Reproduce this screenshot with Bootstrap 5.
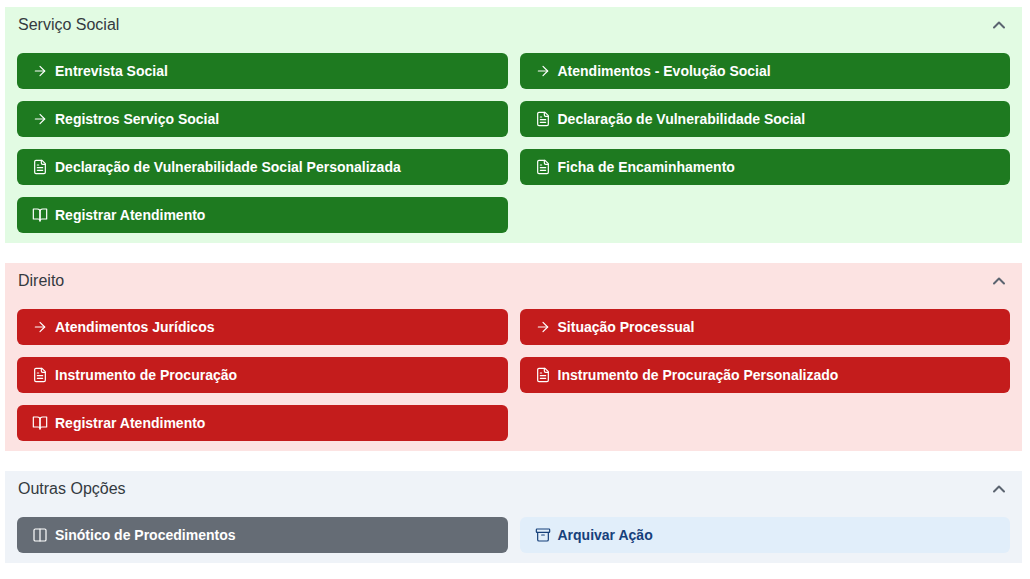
<!DOCTYPE html>
<html lang="pt-BR">
<head>
  <meta charset="UTF-8" />
  <meta name="viewport" content="width=device-width, initial-scale=1.0"/>
  <title>Ações</title>
  <link href="https://cdn.jsdelivr.net/npm/bootstrap@5.3.3/dist/css/bootstrap.min.css" rel="stylesheet">
  <style>
    body {
      background-color: #fff;
      font-family: "Liberation Sans", Arial, sans-serif;
      padding: 7px 8px 0 5px;
    }

    .area + .area { margin-top: 20px; }
    .area-green { background-color: #e2fbe3; }
    .area-red { background-color: #fce3e2; }
    .area-grey { background-color: #eff3f8; }

    .area-toggle {
      height: 36px;
      padding: 0 13px;
      border: 0;
      background: none;
      color: #343a40;
      font-size: 16px;
    }
    .area-toggle svg { color: #5b6470; stroke-width: 2.4; }
    .area-toggle.collapsed svg { transform: rotate(180deg); }

    .area-body { padding: 10px 12px; }
    .btn-grid {
      display: grid;
      grid-template-columns: 1fr 1fr;
      gap: 12px;
    }

    .act {
      height: 36px;
      padding: 0 15px;
      border: 0;
      border-radius: 6px;
      font-size: 14px;
      font-weight: 700;
      gap: 7px;
    }
    .act svg { flex: none; stroke-width: 1.8; }
    .act-green, .act-green:hover { background-color: #1e7a20; color: #fff; }
    .act-red, .act-red:hover { background-color: #c41c1c; color: #fff; }
    .act-grey, .act-grey:hover { background-color: #656c75; color: #fff; }
    .act-light, .act-light:hover { background-color: #e1eefa; color: #16407a; }

    .ico {
      fill: none;
      stroke: currentColor;
      stroke-linecap: round;
      stroke-linejoin: round;
    }
  </style>
</head>
<body>

  <svg class="d-none">
    <symbol id="i-arrow" viewBox="0 0 24 24"><path d="M5 12h14"/><path d="m12 5 7 7-7 7"/></symbol>
    <symbol id="i-file" viewBox="0 0 24 24"><path d="M15 2H6a2 2 0 0 0-2 2v16a2 2 0 0 0 2 2h12a2 2 0 0 0 2-2V7Z"/><path d="M14 2v4a2 2 0 0 0 2 2h4"/><path d="M10 9H8"/><path d="M16 13H8"/><path d="M16 17H8"/></symbol>
    <symbol id="i-book" viewBox="0 0 24 24"><path d="M2 3h6a4 4 0 0 1 4 4v14a3 3 0 0 0-3-3H2z"/><path d="M22 3h-6a4 4 0 0 0-4 4v14a3 3 0 0 1 3-3h7z"/></symbol>
    <symbol id="i-columns" viewBox="0 0 24 24"><rect width="18" height="18" x="3" y="3" rx="2"/><path d="M12 3v18"/></symbol>
    <symbol id="i-archive" viewBox="0 0 24 24"><rect width="20" height="5" x="2" y="3" rx="1"/><path d="M4 8v11a2 2 0 0 0 2 2h12a2 2 0 0 0 2-2V8"/><path d="M10 12h4"/></symbol>
    <symbol id="i-up" viewBox="0 0 24 24"><path d="m18 15-6-6-6 6"/></symbol>
  </svg>

  <!-- Servico Social -->
  <section class="area area-green">
    <button class="area-toggle w-100 d-flex align-items-center justify-content-between" type="button" data-bs-toggle="collapse" data-bs-target="#areaSocial">
      <span>Serviço Social</span>
      <svg class="ico" width="20" height="20"><use href="#i-up"/></svg>
    </button>
    <div class="collapse show" id="areaSocial">
      <div class="area-body btn-grid">
        <a href="#" class="btn act act-green d-flex align-items-center"><svg class="ico" width="16" height="16"><use href="#i-arrow"/></svg>Entrevista Social</a>
        <a href="#" class="btn act act-green d-flex align-items-center"><svg class="ico" width="16" height="16"><use href="#i-arrow"/></svg>Atendimentos - Evolução Social</a>
        <a href="#" class="btn act act-green d-flex align-items-center"><svg class="ico" width="16" height="16"><use href="#i-arrow"/></svg>Registros Serviço Social</a>
        <a href="#" class="btn act act-green d-flex align-items-center"><svg class="ico" width="16" height="16"><use href="#i-file"/></svg>Declaração de Vulnerabilidade Social</a>
        <a href="#" class="btn act act-green d-flex align-items-center"><svg class="ico" width="16" height="16"><use href="#i-file"/></svg>Declaração de Vulnerabilidade Social Personalizada</a>
        <a href="#" class="btn act act-green d-flex align-items-center"><svg class="ico" width="16" height="16"><use href="#i-file"/></svg>Ficha de Encaminhamento</a>
        <a href="#" class="btn act act-green d-flex align-items-center"><svg class="ico" width="16" height="16"><use href="#i-book"/></svg>Registrar Atendimento</a>
      </div>
    </div>
  </section>

  <!-- Direito -->
  <section class="area area-red">
    <button class="area-toggle w-100 d-flex align-items-center justify-content-between" type="button" data-bs-toggle="collapse" data-bs-target="#areaDireito">
      <span>Direito</span>
      <svg class="ico" width="20" height="20"><use href="#i-up"/></svg>
    </button>
    <div class="collapse show" id="areaDireito">
      <div class="area-body btn-grid">
        <a href="#" class="btn act act-red d-flex align-items-center"><svg class="ico" width="16" height="16"><use href="#i-arrow"/></svg>Atendimentos Jurídicos</a>
        <a href="#" class="btn act act-red d-flex align-items-center"><svg class="ico" width="16" height="16"><use href="#i-arrow"/></svg>Situação Processual</a>
        <a href="#" class="btn act act-red d-flex align-items-center"><svg class="ico" width="16" height="16"><use href="#i-file"/></svg>Instrumento de Procuração</a>
        <a href="#" class="btn act act-red d-flex align-items-center"><svg class="ico" width="16" height="16"><use href="#i-file"/></svg>Instrumento de Procuração Personalizado</a>
        <a href="#" class="btn act act-red d-flex align-items-center"><svg class="ico" width="16" height="16"><use href="#i-book"/></svg>Registrar Atendimento</a>
      </div>
    </div>
  </section>

  <!-- Outras Opcoes -->
  <section class="area area-grey">
    <button class="area-toggle w-100 d-flex align-items-center justify-content-between" type="button" data-bs-toggle="collapse" data-bs-target="#areaOutras">
      <span>Outras Opções</span>
      <svg class="ico" width="20" height="20"><use href="#i-up"/></svg>
    </button>
    <div class="collapse show" id="areaOutras">
      <div class="area-body btn-grid">
        <a href="#" class="btn act act-grey d-flex align-items-center"><svg class="ico" width="16" height="16"><use href="#i-columns"/></svg>Sinótico de Procedimentos</a>
        <a href="#" class="btn act act-light d-flex align-items-center"><svg class="ico" width="16" height="16"><use href="#i-archive"/></svg>Arquivar Ação</a>
      </div>
    </div>
  </section>

  <script src="https://cdn.jsdelivr.net/npm/bootstrap@5.3.3/dist/js/bootstrap.bundle.min.js"></script>
</body>
</html>
